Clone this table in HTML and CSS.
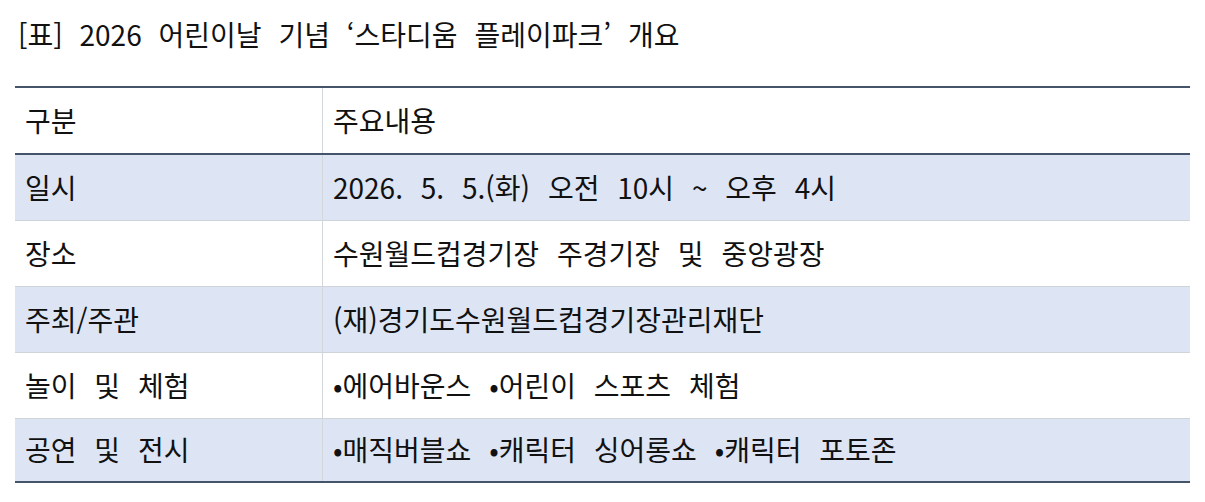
FILE: index.html
```html
<!DOCTYPE html>
<html lang="ko">
<head>
<meta charset="utf-8">
<title>2026 어린이날 기념 스타디움 플레이파크 개요</title>
<link rel="stylesheet" href="styles.css">
</head>
<body>
<div class="page">
  <h1 class="title">[표] 2026 어린이날 기념 ‘스타디움 플레이파크’ 개요</h1>
  <table class="overview">
    <thead>
      <tr><th class="c1">구분</th><th class="c2">주요내용</th></tr>
    </thead>
    <tbody>
      <tr class="shade"><td class="c1">일시</td><td class="c2">2026. 5. 5.(화) 오전 10시 ~ 오후 4시</td></tr>
      <tr><td class="c1">장소</td><td class="c2">수원월드컵경기장 주경기장 및 중앙광장</td></tr>
      <tr class="shade"><td class="c1">주최/주관</td><td class="c2">(재)경기도수원월드컵경기장관리재단</td></tr>
      <tr><td class="c1">놀이 및 체험</td><td class="c2">•에어바운스 •어린이 스포츠 체험</td></tr>
      <tr class="shade last"><td class="c1">공연 및 전시</td><td class="c2">•매직버블쇼 •캐릭터 싱어롱쇼 •캐릭터 포토존</td></tr>
    </tbody>
  </table>
</div>
</body>
</html>
```

FILE: styles.css
```css
html, body {
  margin: 0;
  padding: 0;
  background: #ffffff;
}
.page {
  padding: 16px 15px 0 15px;
  font-family: "Noto Sans CJK KR", "Noto Sans", sans-serif;
  color: #111111;
}
.title {
  margin: 0 0 0 3px;
  font-size: 28px;
  font-weight: 400;
  line-height: 36px;
  word-spacing: 9px;
}
.overview {
  margin-top: 34px;
  width: 1175px;
  border-collapse: collapse;
  font-size: 28px;
}
.overview th,
.overview td {
  font-weight: 400;
  text-align: left;
  padding: 0 0 2px 10px;
  height: 63px;
  line-height: 30px;
  word-spacing: 10px;
  border-bottom: 1px solid #cfd3da;
  border-left: 1px solid #d4d7dc;
}
.overview .c1 {
  width: 297px;
  border-left: none;
}
.overview thead th {
  border-top: 2px solid #44546a;
  border-bottom: 2px solid #44546a;
}
.overview tr.shade td {
  background: #dde5f5;
}
.overview tr.last td {
  border-bottom: 2px solid #44546a;
  height: 60px;
}
```
